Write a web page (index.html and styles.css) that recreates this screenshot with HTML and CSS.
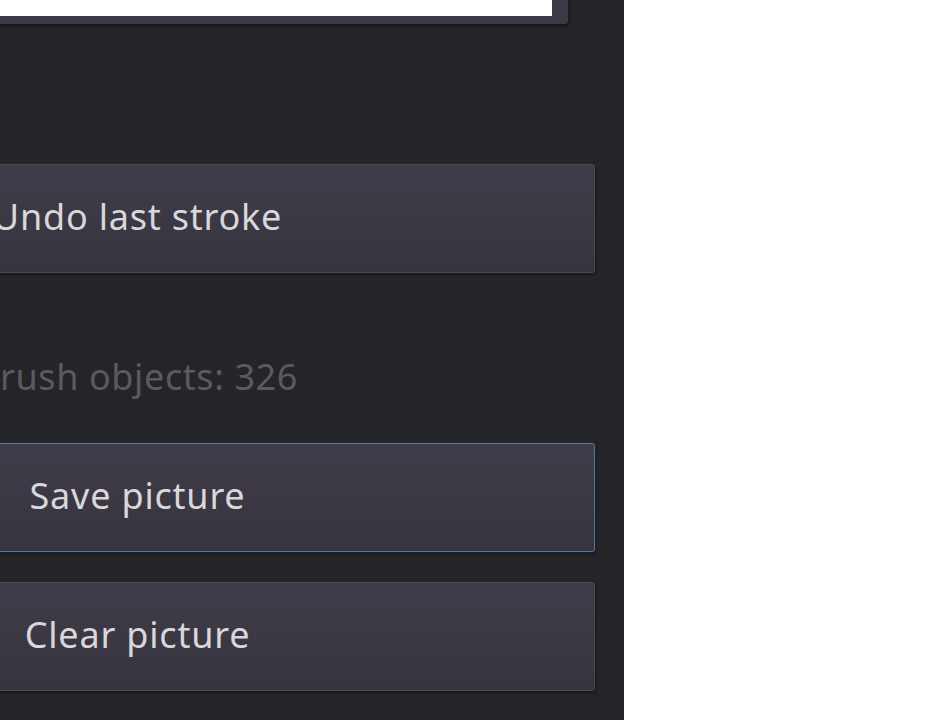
FILE: index.html
```html
<!DOCTYPE html>
<html>
<head>
<meta charset="utf-8">
<link rel="stylesheet" href="styles.css">
</head>
<body>
<div class="page">
  <aside class="panel">
    <div class="canvas-frame"><div class="canvas"></div></div>
    <button class="btn undo">Undo last stroke</button>
    <div class="count">Brush objects: 326</div>
    <button class="btn save focused">Save picture</button>
    <button class="btn clear">Clear picture</button>
  </aside>
  <main class="blank"></main>
</div>
</body>
</html>
```
FILE: styles.css
```css
html, body {
  margin: 0;
  padding: 0;
  height: 100%;
  overflow: hidden;
  background: #ffffff;
}
.page {
  display: flex;
  height: 720px;
}
.panel {
  flex: 0 0 auto;
  width: 947px;
  margin-left: -323px;
  height: 720px;
  background: #252429;
  display: flex;
  flex-direction: column;
  box-sizing: border-box;
  padding-right: 29px;
  font-family: "Noto Sans", "DejaVu Sans", sans-serif;
}
.blank {
  flex: 1;
  background: #ffffff;
}
.canvas-frame {
  margin-top: -40px;
  margin-right: 27px;
  height: 64px;
  box-sizing: border-box;
  padding: 0 16px 8px 0;
  background: #3b3945;
  border-radius: 0 0 3px 0;
  box-shadow: 1px 2px 3px rgba(0,0,0,0.45);
}
.canvas {
  height: 100%;
  background: #ffffff;
}
.btn {
  display: block;
  height: 109px;
  box-sizing: border-box;
  border: 1px solid #4a4856;
  border-radius: 3px;
  background: linear-gradient(#403d4a, #36343e);
  color: #d8d7dc;
  font-family: "Noto Sans", "DejaVu Sans", sans-serif;
  font-size: 36px;
  letter-spacing: 0.8px;
  text-align: center;
  padding: 0 0 5px 3px;
  box-shadow: 1px 2px 3px rgba(0,0,0,0.35);
}
.undo {
  margin-top: 140px;
}
.count {
  height: 170px;
  margin-left: 299px;
  display: flex;
  align-items: center;
  color: #5b5a61;
  font-size: 36px;
  letter-spacing: 0.6px;
  padding-top: 36px;
  box-sizing: border-box;
}
.save {
  margin-top: 0;
}
.focused {
  border-color: #56759c;
  box-shadow: 0 0 1px rgba(90,120,160,0.6), 1px 2px 3px rgba(0,0,0,0.35);
}
.clear {
  margin-top: 30px;
}
```
